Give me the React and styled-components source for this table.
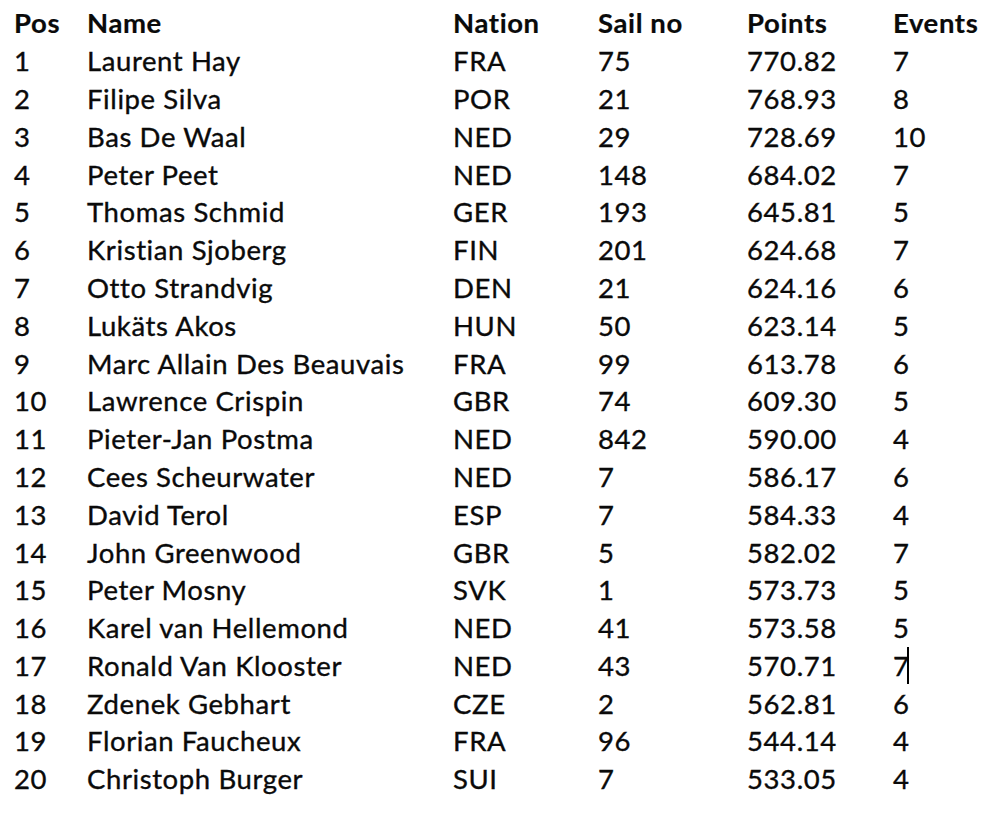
import React from 'react'
import styled, { createGlobalStyle } from 'styled-components'

const GlobalStyle = createGlobalStyle`
    html, body {
        margin: 0;
        padding: 0;
        background: #ffffff;
    }
    body {
        font-family: Lato, "Open Sans", "Liberation Sans", sans-serif;
        color: #0a0a0a;
    }
`

const results = [
    [1, 'Laurent Hay', 'FRA', '75', '770.82', '7'],
    [2, 'Filipe Silva', 'POR', '21', '768.93', '8'],
    [3, 'Bas De Waal', 'NED', '29', '728.69', '10'],
    [4, 'Peter Peet', 'NED', '148', '684.02', '7'],
    [5, 'Thomas Schmid', 'GER', '193', '645.81', '5'],
    [6, 'Kristian Sjoberg', 'FIN', '201', '624.68', '7'],
    [7, 'Otto Strandvig', 'DEN', '21', '624.16', '6'],
    [8, 'Lukäts Akos', 'HUN', '50', '623.14', '5'],
    [9, 'Marc Allain Des Beauvais', 'FRA', '99', '613.78', '6'],
    [10, 'Lawrence Crispin', 'GBR', '74', '609.30', '5'],
    [11, 'Pieter-Jan Postma', 'NED', '842', '590.00', '4'],
    [12, 'Cees Scheurwater', 'NED', '7', '586.17', '6'],
    [13, 'David Terol', 'ESP', '7', '584.33', '4'],
    [14, 'John Greenwood', 'GBR', '5', '582.02', '7'],
    [15, 'Peter Mosny', 'SVK', '1', '573.73', '5'],
    [16, 'Karel van Hellemond', 'NED', '41', '573.58', '5'],
    [17, 'Ronald Van Klooster', 'NED', '43', '570.71', '7'],
    [18, 'Zdenek Gebhart', 'CZE', '2', '562.81', '6'],
    [19, 'Florian Faucheux', 'FRA', '96', '544.14', '4'],
    [20, 'Christoph Burger', 'SUI', '7', '533.05', '4'],
]

const Sheet = styled.div`
    width: 1000px;
    height: 818px;
    padding: 3px 0 0 14px;
    box-sizing: border-box;
    overflow: hidden;
`

const Row = styled.div`
    display: grid;
    grid-template-columns: 73px 366px 145px 149px 146px 1fr;
    height: ${(p) => (p.$head ? '39px' : '37.8px')};
    align-items: center;
    font-size: 27.5px;
    font-weight: ${(p) => (p.$head ? 700 : 400)};
    letter-spacing: ${(p) => (p.$head ? '0.6px' : '0.6px')};
    -webkit-text-stroke: ${(p) => (p.$head ? '0.2px' : '0.35px')} #0a0a0a;
`

const Cell = styled.div`
    position: relative;
    white-space: nowrap;
    line-height: 1;
`

const Caret = styled.span`
    position: absolute;
    left: 14px;
    top: -5px;
    width: 2px;
    height: 37px;
    background: #000;
`

export default function App() {
    return (
        <>
            <GlobalStyle />
            <Sheet>
                <Row $head>
                    <Cell>Pos</Cell>
                    <Cell>Name</Cell>
                    <Cell>Nation</Cell>
                    <Cell>Sail no</Cell>
                    <Cell>Points</Cell>
                    <Cell>Events</Cell>
                </Row>
                {results.map(([pos, name, nation, sail, points, events]) => (
                    <Row key={pos}>
                        <Cell>{pos}</Cell>
                        <Cell>{name}</Cell>
                        <Cell>{nation}</Cell>
                        <Cell>{sail}</Cell>
                        <Cell>{points}</Cell>
                        <Cell>
                            {events}
                            {pos === 17 && <Caret />}
                        </Cell>
                    </Row>
                ))}
            </Sheet>
        </>
    )
}
